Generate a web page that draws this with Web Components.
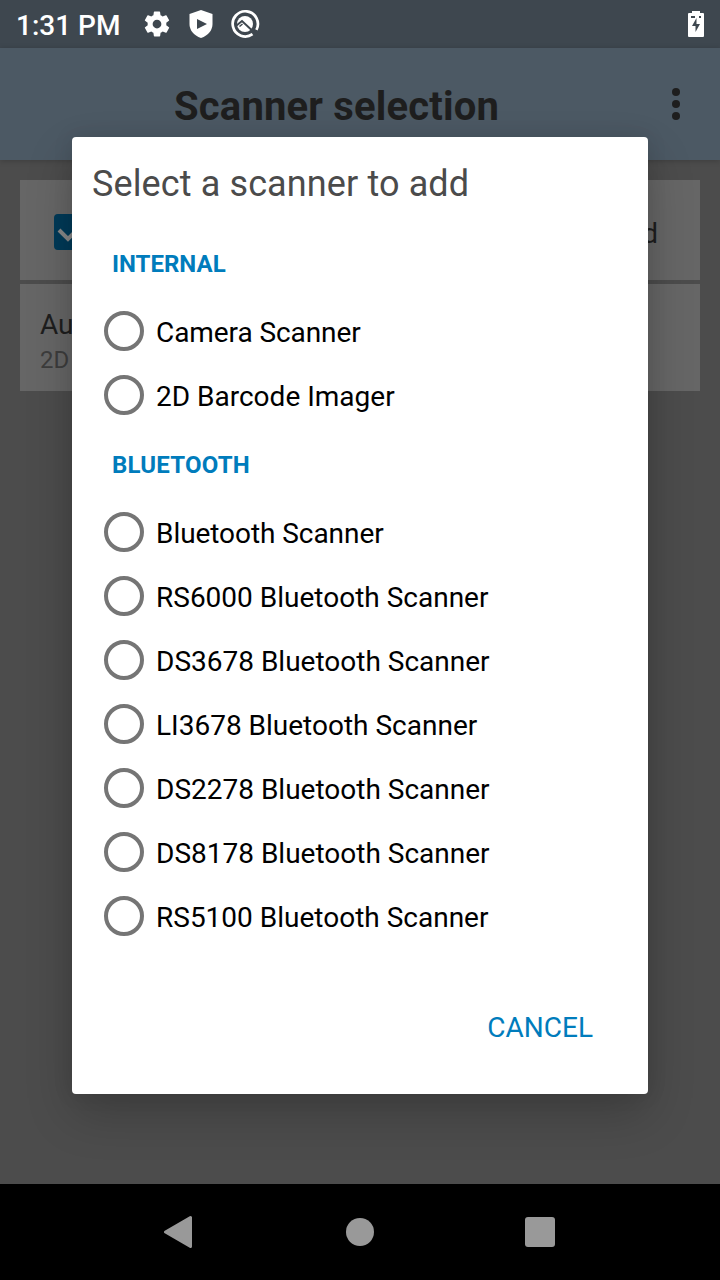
<!DOCTYPE html>
<html lang="en">
<head>
<meta charset="utf-8">
<title>Scanner selection</title>
<style>
html,body{margin:0;padding:0}
body{font-family:Roboto,"Liberation Sans",sans-serif;width:720px;height:1280px;overflow:hidden;background:#4c4c4c}
</style>
</head>
<body>
<scanner-screen></scanner-screen>
<script>
const define = (name, html) => customElements.define(name, class extends HTMLElement {
  constructor() {
    super();
    const t = document.createElement('template');
    t.innerHTML = html;
    this.attachShadow({mode: 'open'}).append(t.content.cloneNode(true));
  }
});

define('status-bar', `<style>
:host{display:flex;align-items:center;height:48px;box-sizing:border-box;padding:0 10px 0 16px;background:#3e474f;color:#fff}
.time{font-size:28px;font-weight:500;line-height:48px;width:126px;padding-top:2px;box-sizing:border-box;height:48px;white-space:nowrap}
.icons{display:flex;gap:14px;flex:1}
svg{display:block}
</style>
<div class="time">1:31 PM</div>
<div class="icons">
<svg width="30" height="30" viewBox="0 0 24 24" fill="#fff"><path d="M19.4 13a7.500 7.500 0 0 0 0-2l2.100-1.650a.5.5 0 0 0 .12-.64l-2-3.460a.5.5 0 0 0-.61-.22l-2.490 1a7.300 7.300 0 0 0-1.690-.98l-.38-2.650A.49.49 0 0 0 14 2h-4a.49.49 0 0 0-.49.42l-.38 2.650c-.61.25-1.170.59-1.690.98l-2.490-1a.5.5 0 0 0-.61.22l-2 3.460a.5.5 0 0 0 .12.64L4.570 11a7.500 7.500 0 0 0 0 2l-2.110 1.650a.5.5 0 0 0-.12.640l2 3.460c.12.22.39.3.61.22l2.490-1c.52.4 1.080.73 1.690.98l.38 2.650c.03.24.24.42.49.42h4c.25 0 .46-.18.490-.42l.38-2.650c.61-.25 1.170-.59 1.690-.98l2.490 1c.23.090.49 0 .61-.22l2-3.460a.5.5 0 0 0-.12-.64zM12 15.500a3.500 3.500 0 1 1 0-7 3.500 3.500 0 0 1 0 7z"/></svg>
<svg width="30" height="30" viewBox="0 0 30 30"><path d="M15 1 26.500 5v10c0 6-4 11.500-11.500 14C7.500 26.500 3.500 21 3.500 15V5z" fill="#fff"/><path d="M11 10v10l10-5z" fill="#3e474f"/></svg>
<svg width="30" height="30" viewBox="0 0 30 30"><path d="M26.400 20.800A12.600 12.600 0 1 0 22.500 25.200" fill="none" stroke="#fff" stroke-width="2.700"/><circle cx="15" cy="15" r="8" fill="#fff"/><path d="M6.500 16.500l5.500-4.500 15 14" fill="none" stroke="#3e474f" stroke-width="2"/><path d="M12.500 15l-3 2.500" fill="none" stroke="#3e474f" stroke-width="1.500"/></svg>
</div>
<svg width="28" height="28" viewBox="0 0 28 28"><path d="M10 1h8v2h3a1 1 0 0 1 1 1v22a1 1 0 0 1-1 1H7a1 1 0 0 1-1-1V4a1 1 0 0 1 1-1h3z" fill="#fff"/><path d="M14.500 8l-4.500 8h3.500v6l4.500-8h-3.500zM9 6h4v2H9zM17 6h2v2h-2z" fill="#3e474f"/></svg>`);

define('app-bar', `<style>
:host{display:flex;align-items:center;height:112px;box-sizing:border-box;padding:4px 39px 0 174px;background:#4c5964;color:#1e1e1e;box-shadow:0 1px 6px #0003;position:relative}
.title{flex:1;font-size:40px;font-weight:700;line-height:48px;white-space:nowrap;letter-spacing:.17px;padding-top:2px}
svg{display:block;margin-top:-4px}
</style>
<div class="title"><slot></slot></div>
<svg width="10" height="34" fill="#1e1e1e"><circle cx="5" cy="5" r="4"/><circle cx="5" cy="17" r="4"/><circle cx="5" cy="29" r="4"/></svg>`);

define('back-card', `<style>
:host{display:flex;box-sizing:border-box;background:#666;color:#1e1e1e;font-size:28px}
</style><slot></slot>`);

define('nav-bar', `<style>
:host{display:grid;grid-template-columns:repeat(3,180px);justify-content:center;justify-items:center;align-items:center;height:96px;background:#000}
svg{display:block}
</style>
<svg width="32" height="36"><path d="M26.500 3.500v29L1.500 18z" fill="#999" stroke="#999" stroke-width="3" stroke-linejoin="round"/></svg>
<svg width="28" height="28"><circle cx="14" cy="14" r="14" fill="#999"/></svg>
<svg width="30" height="30"><rect width="30" height="30" rx="3" fill="#999"/></svg>`);

define('radio-row', `<style>
:host{display:flex;align-items:center;height:64px;gap:12px;color:#000;font-size:28px;white-space:nowrap}
i{box-sizing:border-box;width:40px;height:40px;border:4px solid #757575;border-radius:50%}
span{line-height:34px;padding-top:4px}
</style><i></i><span><slot></slot></span>`);

define('group-header', `<style>
:host{display:block;font-size:24px;font-weight:700;color:#007cbc;line-height:28px;white-space:nowrap;padding-left:8px}
</style><slot></slot>`);

define('select-dialog', `<style>
:host{display:flex;flex-direction:column;box-sizing:border-box;width:576px;height:957px;background:#fff;border-radius:4px;padding:26px 55px 0 20px;box-shadow:0 20px 48px rgba(0,0,0,.2),0 0 20px rgba(0,0,0,.1)}
.title{font-size:36px;line-height:42px;color:#4b4b4b;white-space:nowrap;letter-spacing:.12px}
.list{padding-left:12px;margin-top:45px}
.list group-header{margin-bottom:21px}
.list .second{margin-top:24px;letter-spacing:.2px}
.cancel{align-self:flex-end;font-size:28px;line-height:34px;color:#007cbc;margin-top:63px}
</style>
<div class="title">Select a scanner to add</div>
<div class="list">
<group-header>INTERNAL</group-header>
<radio-row style="letter-spacing:-.08px">Camera Scanner</radio-row>
<radio-row>2D Barcode Imager</radio-row>
<group-header class="second">BLUETOOTH</group-header>
<radio-row style="letter-spacing:-.06px">Bluetooth Scanner</radio-row>
<radio-row>RS6000 Bluetooth Scanner</radio-row>
<radio-row>DS3678 Bluetooth Scanner</radio-row>
<radio-row>LI3678 Bluetooth Scanner</radio-row>
<radio-row>DS2278 Bluetooth Scanner</radio-row>
<radio-row>DS8178 Bluetooth Scanner</radio-row>
<radio-row>RS5100 Bluetooth Scanner</radio-row>
</div>
<div class="cancel">CANCEL</div>`);

define('scanner-screen', `<style>
:host{display:flex;flex-direction:column;width:720px;height:1280px;position:relative;background:#4c4c4c}
main{flex:1;display:flex;flex-direction:column;gap:4px;padding:20px 20px 0}
.first{height:100px;align-items:center;justify-content:space-between;padding:6px 42px 0 34px}
.first svg{display:block;margin-top:-2px}
.auto{height:107px;flex-direction:column;padding:24px 20px 0;line-height:34px}
small{font-size:24px;line-height:28px;color:#3d3d3d;margin-top:4px}
select-dialog{position:absolute;left:72px;top:137px;z-index:2}
nav-bar{z-index:3}
</style>
<status-bar></status-bar>
<app-bar>Scanner selection</app-bar>
<main>
<back-card class="first"><svg width="36" height="36"><rect width="36" height="36" rx="4" fill="#003a58"/><path d="M5 16l9 9 17-17" fill="none" stroke="#888" stroke-width="4"/></svg><span>d</span></back-card>
<back-card class="auto"><span>Au</span><small>2D</small></back-card>
</main>
<nav-bar></nav-bar>
<select-dialog></select-dialog>`);
</script>
</body>
</html>
